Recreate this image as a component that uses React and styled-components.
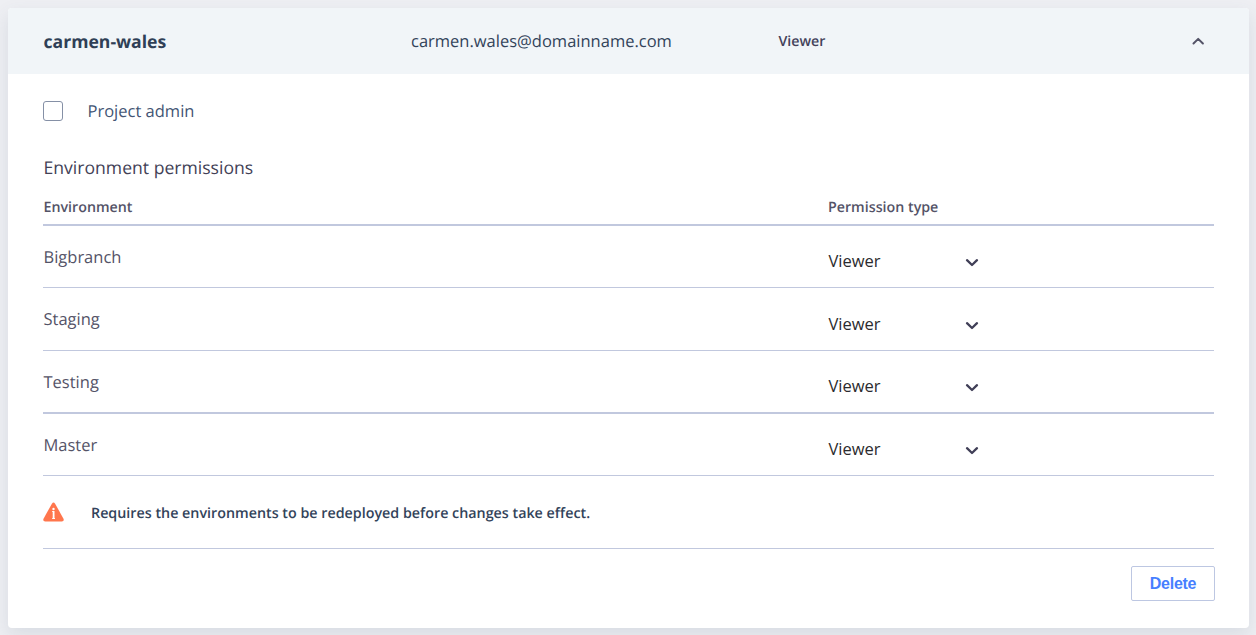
import React from "react";
import styled, { createGlobalStyle } from "styled-components";

const GlobalStyle = createGlobalStyle`
  *, *::before, *::after { box-sizing: border-box; }
  body {
    margin: 0;
    background: #eeeff3;
    font-family: "Open Sans", "Noto Sans", sans-serif;
    -webkit-font-smoothing: antialiased;
    text-rendering: geometricPrecision;
  }
`;

const Page = styled.main`
  height: 635px;
  padding: 8px 7px 7px 8px;
  overflow: hidden;
`;

const Card = styled.section`
  height: 620px;
  background: #fff;
  border-radius: 4px;
  box-shadow: 0 7px 18px rgba(70, 95, 115, 0.13);
`;

const Header = styled.header`
  display: grid;
  grid-template-columns: 367.5px 367.5px 1fr 14px;
  align-items: center;
  height: 66px;
  padding: 0 44px 0 35.5px;
  background: #f1f5f8;
  border-radius: 4px 4px 0 0;
`;

const UserName = styled.span`
  padding-top: 2px;
  font-size: 17.6px;
  font-weight: 700;
  color: #2f3f56;
`;

const Email = styled.span`
  padding-bottom: 2px;
  font-size: 16.5px;
  color: #32435a;
`;

const Role = styled.span`
  padding-top: 1px;
  font-size: 14.2px;
  font-weight: 600;
  color: #43425a;
`;

const Body = styled.div`
  display: flex;
  flex-direction: column;
  padding: 0 35px;
`;

const AdminOption = styled.label`
  display: flex;
  align-items: center;
  gap: 24.5px;
  height: 24px;
  margin-top: 25px;
  font-size: 16.5px;
  line-height: 22px;
  color: #435574;
`;

const Checkbox = styled.input`
  appearance: none;
  width: 20px;
  height: 20px;
  margin: 0;
  background: #fff;
  border: 1px solid #8590a6;
  border-radius: 3px;
`;

const Title = styled.h2`
  margin: 32px 0 0;
  padding-left: 0.5px;
  font-size: 17.6px;
  line-height: 26px;
  font-weight: 400;
  color: #424156;
`;

const Row = styled.div`
  display: grid;
  grid-template-columns: 784.5px 1fr;
  height: ${(p) => p.$height}px;
  border-bottom: ${(p) => p.$line || 1}px solid #c1c8de;
`;

const HeadRow = styled(Row)`
  margin-top: 13px;
  padding: 4px 0 0 0.5px;
  font-size: 14.25px;
  line-height: 20px;
  font-weight: 600;
  color: #545367;
`;

const Environment = styled.span`
  padding: 19px 0 0 0.5px;
  font-size: 16.5px;
  line-height: 24px;
  color: #545367;
`;

const Select = styled.button`
  display: flex;
  align-items: center;
  justify-content: space-between;
  width: 152.5px;
  height: 24px;
  margin: ${(p) => p.$top}px 0 0;
  padding: 0 0 0 1px;
  border: 0;
  background: none;
  font: inherit;
  font-size: 16.5px;
  color: #2b2b2e;
`;

const Notice = styled.div`
  display: flex;
  align-items: center;
  gap: 27px;
  height: 73px;
  border-bottom: 1px solid #c1c8de;
  font-size: 14.3px;
  font-weight: 600;
  color: #32435a;
`;

const NoticeText = styled.span`
  padding-top: 2px;
`;

const DeleteButton = styled.button`
  align-self: flex-end;
  width: 84px;
  height: 35px;
  margin: 17px -1px 0 0;
  padding: 0;
  background: #fff;
  border: 1px solid #bdc7e2;
  border-radius: 2px;
  font-family: "Liberation Sans", sans-serif;
  font-size: 16px;
  letter-spacing: -0.25px;
  font-weight: 700;
  color: #467fff;
`;

const CollapseIcon = () => (
  <svg width="14" height="14" viewBox="0 0 14 14" fill="none" stroke="#545367" strokeWidth="2" strokeLinecap="round" strokeLinejoin="round">
    <path d="M2.5 9.5 7.2 4.9l4.7 4.6" />
  </svg>
);

const ExpandIcon = () => (
  <svg width="16" height="16" viewBox="0 0 16 16" fill="none" stroke="#403f57" strokeWidth="2.3" strokeLinecap="round" strokeLinejoin="round">
    <path d="M3 8.2 8 13l5-4.8" />
  </svg>
);

const WarningIcon = () => (
  <svg width="21" height="20" viewBox="0 0 21 20">
    <path d="M8.9 1.7Q10.5-.5 12.1 1.7L20.5 16.8Q21.4 19.4 18.8 19.5H2.2Q-.4 19.4.5 16.8Z" fill="#ff764d" />
    <circle cx="10.5" cy="7" r="1.2" fill="#fff" />
    <path d="M9.2 9.5h1.5M9.2 16.5h2.8" fill="none" stroke="#fff" strokeWidth="1" />
    <rect x="9.7" y="9" width="1.8" height="7.5" fill="#fff" />
  </svg>
);

const environments = [
  { name: "Bigbranch", height: 62, top: 22 },
  { name: "Staging", height: 63, top: 23 },
  { name: "Testing", height: 63, top: 22, line: 2 },
  { name: "Master", height: 62, top: 22 },
];

export default function App() {
  return (
    <>
      <GlobalStyle />
      <Page>
        <Card>
          <Header>
            <UserName>carmen-wales</UserName>
            <Email>carmen.wales@domainname.com</Email>
            <Role>Viewer</Role>
            <CollapseIcon />
          </Header>
          <Body>
            <AdminOption>
              <Checkbox type="checkbox" />
              Project admin
            </AdminOption>
            <Title>Environment permissions</Title>
            <HeadRow $height={32} $line={2}>
              <span>Environment</span>
              <span>Permission type</span>
            </HeadRow>
            {environments.map((env) => (
              <Row key={env.name} $height={env.height} $line={env.line}>
                <Environment>{env.name}</Environment>
                <Select type="button" $top={env.top}>
                  Viewer
                  <ExpandIcon />
                </Select>
              </Row>
            ))}
            <Notice>
              <WarningIcon />
              <NoticeText>Requires the environments to be redeployed before changes take effect.</NoticeText>
            </Notice>
            <DeleteButton type="button">Delete</DeleteButton>
          </Body>
        </Card>
      </Page>
    </>
  );
}
